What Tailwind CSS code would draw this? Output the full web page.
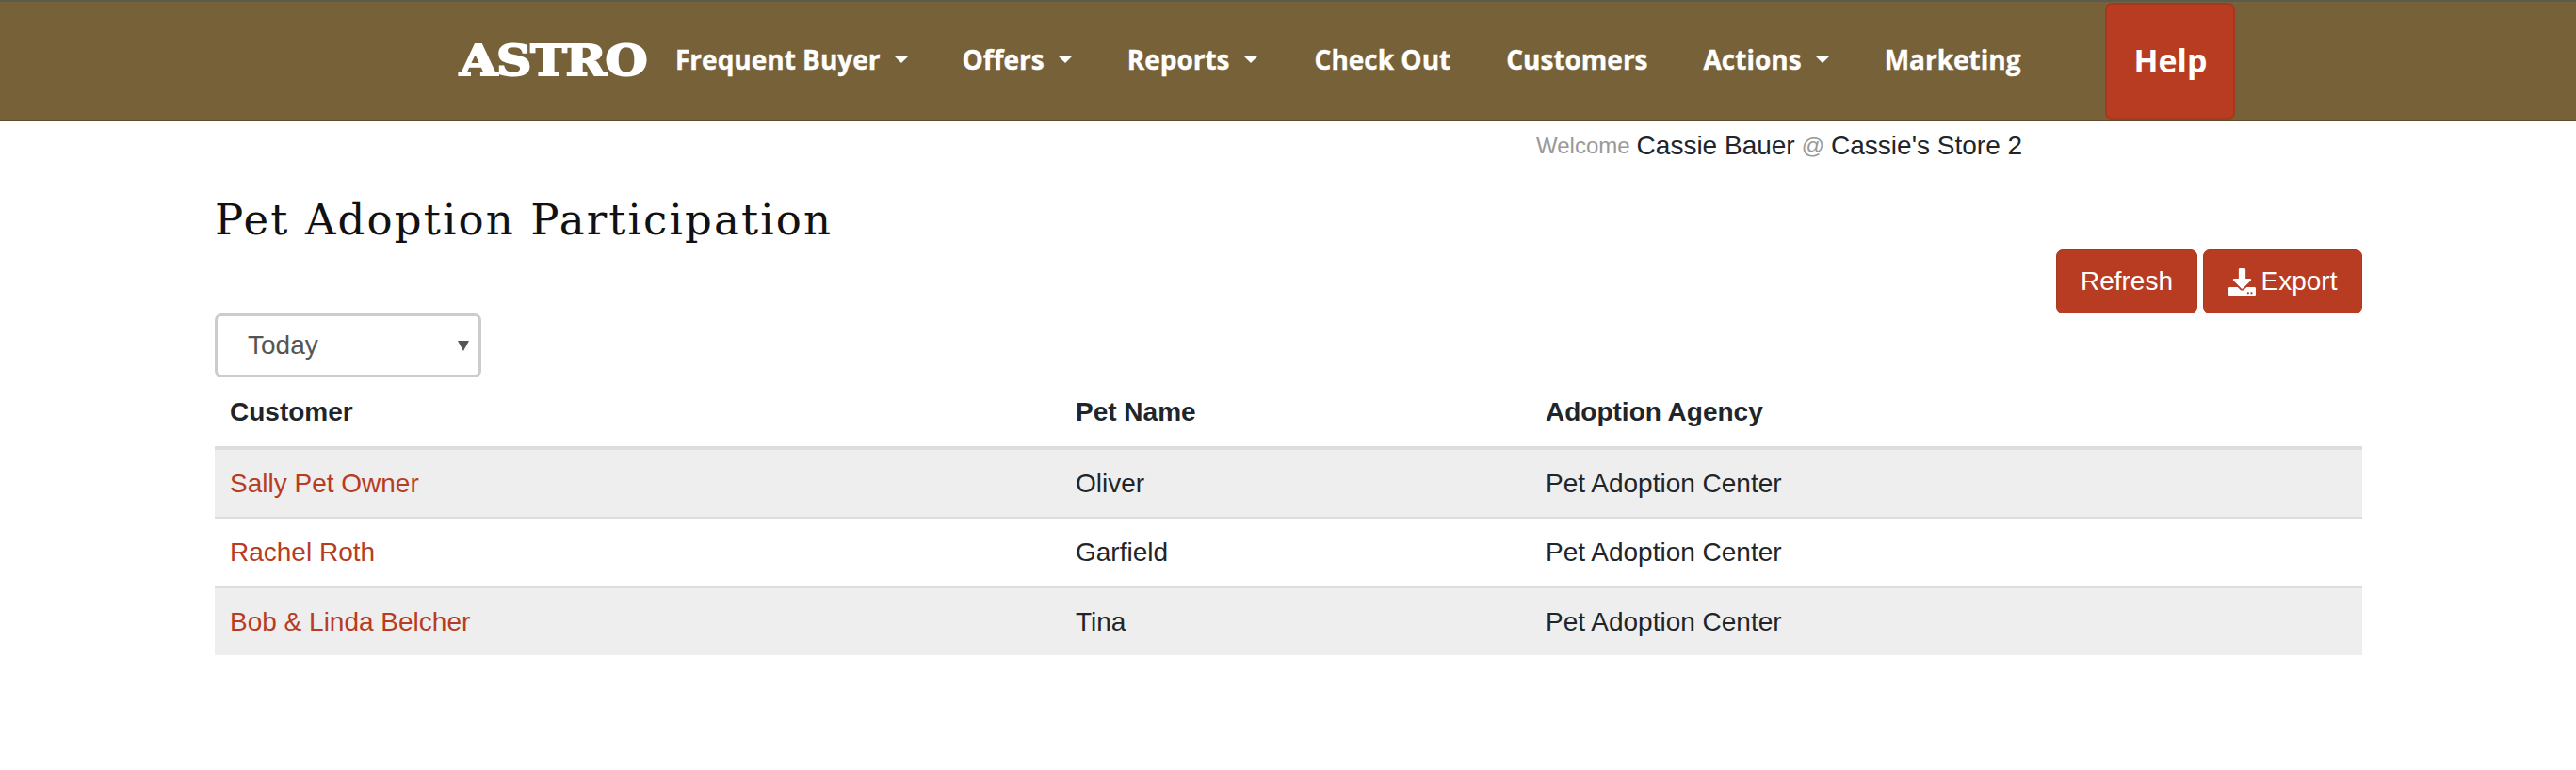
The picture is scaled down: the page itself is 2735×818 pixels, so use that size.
<!DOCTYPE html>
<html lang="en">
<head>
  <meta charset="UTF-8">
  <title>Pet Adoption Participation</title>
  <script src="https://cdn.jsdelivr.net/npm/@tailwindcss/browser@4"></script>
</head>
<body class="bg-white font-['Liberation_Sans',sans-serif] text-[28px] text-[#212529] overflow-hidden">
  <nav class="h-[129px] bg-[#776139] border-t-[2px] border-t-[#5a5a50] border-b-[2px] border-b-[#5f4c29] flex items-center pl-[488px] font-['Open_Sans',sans-serif] font-bold text-white text-[28px]">
    <a class="w-[199px] mr-[30px] font-['DejaVu_Serif',serif] font-black text-[45px] leading-none tracking-[-1px] scale-x-[1.15] origin-left [-webkit-text-stroke:2px_white]">ASTRO</a>
    <a class="flex items-center gap-[14px] mr-[57px] pb-[3px] [-webkit-text-stroke:0.4px_white]">Frequent Buyer <span class="border-x-[8px] border-x-transparent border-t-[8px] border-t-white"></span></a>
    <a class="flex items-center gap-[14px] mr-[58px] pb-[3px] [-webkit-text-stroke:0.4px_white]">Offers <span class="border-x-[8px] border-x-transparent border-t-[8px] border-t-white"></span></a>
    <a class="flex items-center gap-[14px] mr-[60px] pb-[3px] [-webkit-text-stroke:0.4px_white]">Reports <span class="border-x-[8px] border-x-transparent border-t-[8px] border-t-white"></span></a>
    <a class="mr-[59px] pb-[3px] [-webkit-text-stroke:0.4px_white]">Check Out</a>
    <a class="mr-[59px] pb-[3px] [-webkit-text-stroke:0.4px_white]">Customers</a>
    <a class="flex items-center gap-[14px] mr-[58px] pb-[3px] [-webkit-text-stroke:0.4px_white]">Actions <span class="border-x-[8px] border-x-transparent border-t-[8px] border-t-white"></span></a>
    <a class="mr-[90px] pb-[3px] [-webkit-text-stroke:0.4px_white]">Marketing</a>
    <a class="w-[138px] h-[124px] flex items-center justify-center bg-[#b83c22] border-2 border-[#a83720] rounded-[7px] text-[34px]">Help</a>
  </nav>

  <div class="h-[52px] pl-[1631px] flex items-center whitespace-nowrap">
    <span class="text-[24px] text-[#999] mr-[7px]">Welcome</span>
    <span>Cassie Bauer</span>
    <span class="text-[24px] text-[#999] mx-[7px]">@</span>
    <span>Cassie's Store 2</span>
  </div>

  <main class="ml-[228px] w-[2280px]">
    <div class="h-[152px] flex justify-between items-end">
      <h1 class="self-start pt-[23px] font-['DejaVu_Serif',serif] font-normal text-[45px] leading-[60px] text-[#111] tracking-[2.15px]">Pet Adoption Participation</h1>
      <div class="flex gap-[6px]">
        <button class="w-[150px] h-[68px] bg-[#b83c22] border border-[#a83720] rounded-[7px] text-white">Refresh</button>
        <button class="w-[169px] h-[68px] bg-[#b83c22] border border-[#a83720] rounded-[7px] text-white flex items-center justify-center gap-[6px]">
          <svg class="w-[29px] h-[29px]" viewBox="0 0 512 512" fill="currentColor"><path d="M216 0h80c13.3 0 24 10.7 24 24v168h87.7c17.8 0 26.7 21.5 14.1 34.1L269.7 378.3c-7.5 7.5-19.8 7.5-27.3 0L90.1 226.1c-12.6-12.6-3.7-34.1 14.1-34.1H192V24c0-13.3 10.7-24 24-24zm296 376v112c0 13.3-10.7 24-24 24H24c-13.3 0-24-10.7-24-24V376c0-13.3 10.7-24 24-24h146.7l49 49c20.1 20.1 52.5 20.1 72.6 0l49-49H488c13.3 0 24 10.7 24 24zm-124 88c0-11-9-20-20-20s-20 9-20 20 9 20 20 20 20-9 20-20zm64 0c0-11-9-20-20-20s-20 9-20 20 9 20 20 20 20-9 20-20z"/></svg>
          Export
        </button>
      </div>
    </div>

    <div class="relative w-[283px] h-[68px]">
      <select class="w-full h-full appearance-none bg-white border-[3px] border-[#ccc] rounded-[7px] pl-[32px] text-[#555]">
        <option>Today</option>
      </select>
      <span class="absolute right-[13px] top-[29px] border-x-[6px] border-x-transparent border-t-[11px] border-t-[#555] pointer-events-none"></span>
    </div>

    <table class="w-full table-fixed border-collapse">
      <thead>
        <tr class="h-[75px] border-b-[4px] border-[#ddd] text-left">
          <th class="w-[898px] pl-[16px] font-bold">Customer</th>
          <th class="w-[499px] pl-[16px] font-bold">Pet Name</th>
          <th class="pl-[16px] font-bold">Adoption Agency</th>
        </tr>
      </thead>
      <tbody>
        <tr class="h-[74px] bg-[#eee] border-b-2 border-[#ddd]">
          <td class="pl-[16px] text-[#b83c22]">Sally Pet Owner</td>
          <td class="pl-[16px]">Oliver</td>
          <td class="pl-[16px]">Pet Adoption Center</td>
        </tr>
        <tr class="h-[74px] border-b-2 border-[#ddd]">
          <td class="pl-[16px] text-[#b83c22]">Rachel Roth</td>
          <td class="pl-[16px]">Garfield</td>
          <td class="pl-[16px]">Pet Adoption Center</td>
        </tr>
        <tr class="h-[72px] bg-[#eee]">
          <td class="pl-[16px] text-[#b83c22]">Bob &amp; Linda Belcher</td>
          <td class="pl-[16px]">Tina</td>
          <td class="pl-[16px]">Pet Adoption Center</td>
        </tr>
      </tbody>
    </table>
  </main>
</body>
</html>
